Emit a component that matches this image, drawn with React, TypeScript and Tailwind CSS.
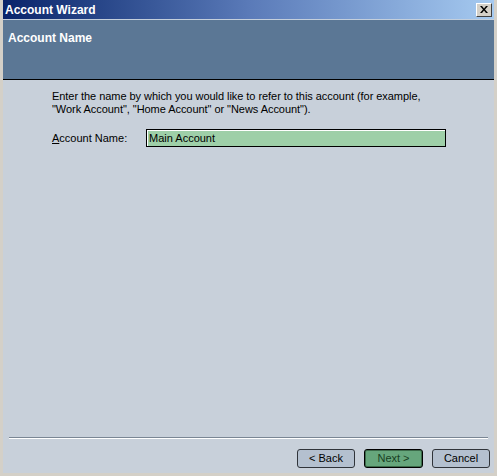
import React from "react";

export default function App() {
  const font = { fontFamily: '"Liberation Sans", Arial, sans-serif' };
  return (
    <div className="w-[497px] h-[476px] bg-[#d4d0c8] flex flex-col pl-[3px] pr-[3px] pb-[3px] text-[11px] text-black" style={font}>
      <div className="h-[19px] flex items-center justify-between bg-gradient-to-r from-[#0a246a] via-[#5a7ab8] to-[#a6caf0] pl-[2px] pr-[2px]">
        <span className="text-white font-bold text-[12px] leading-none">Account Wizard</span>
        <div className="w-[16px] h-[14px] bg-[#d4d0c8] border border-t-white border-l-white border-r-[#404040] border-b-[#404040] flex items-center justify-center">
          <svg width="8" height="7" viewBox="0 0 8 7">
            <path d="M0 0h2l2 2.5L6 0h2L5 3.5 8 7H6L4 4.5 2 7H0l3-3.5z" fill="black" />
          </svg>
        </div>
      </div>
      <div className="h-[1px] bg-[#c4cfdc]" />
      <div className="h-[59px] bg-[#5b7795] pl-[5px] pt-[9px]">
        <span className="text-white font-bold text-[12px]">Account Name</span>
      </div>
      <div className="h-[1px] bg-black" />
      <div className="flex-1 bg-[#c8d0da] flex flex-col">
        <div className="pl-[49px] pt-[10px] leading-[13px] tracking-[-0.05px]">
          <div>Enter the name by which you would like to refer to this account (for example,</div>
          <div>"Work Account", "Home Account" or "News Account").</div>
        </div>
        <div className="flex items-center pl-[49px] mt-[13px]">
          <span className="w-[94px]"><span className="underline">A</span>ccount Name:</span>
          <div className="w-[300px] h-[18px] bg-[#9ecfa8] border border-black shadow-[inset_1px_1px_0_#ffffff] flex items-center pl-[2px]">Main Account</div>
        </div>
        <div className="flex-1" />
        <div className="mx-[6px] h-[2px] border-t border-t-[#7a8694] border-b border-b-white" />
        <div className="flex justify-end gap-[9px] pr-[4px] pt-[10px] pb-[5px]">
          <button className="w-[58px] h-[19px] rounded-[3px] border border-[#30343a] bg-[#b4c0cf] text-black text-[11px]" style={font}>&lt; Back</button>
          <button className="w-[59px] h-[19px] rounded-[3px] border border-black bg-[#66a67c] text-[#173f22] text-[11px] ring-1 ring-inset ring-[#3c6b4a]" style={font}>Next &gt;</button>
          <button className="w-[58px] h-[19px] rounded-[3px] border border-[#30343a] bg-[#b4c0cf] text-black text-[11px]" style={font}>Cancel</button>
        </div>
      </div>
    </div>
  );
}
